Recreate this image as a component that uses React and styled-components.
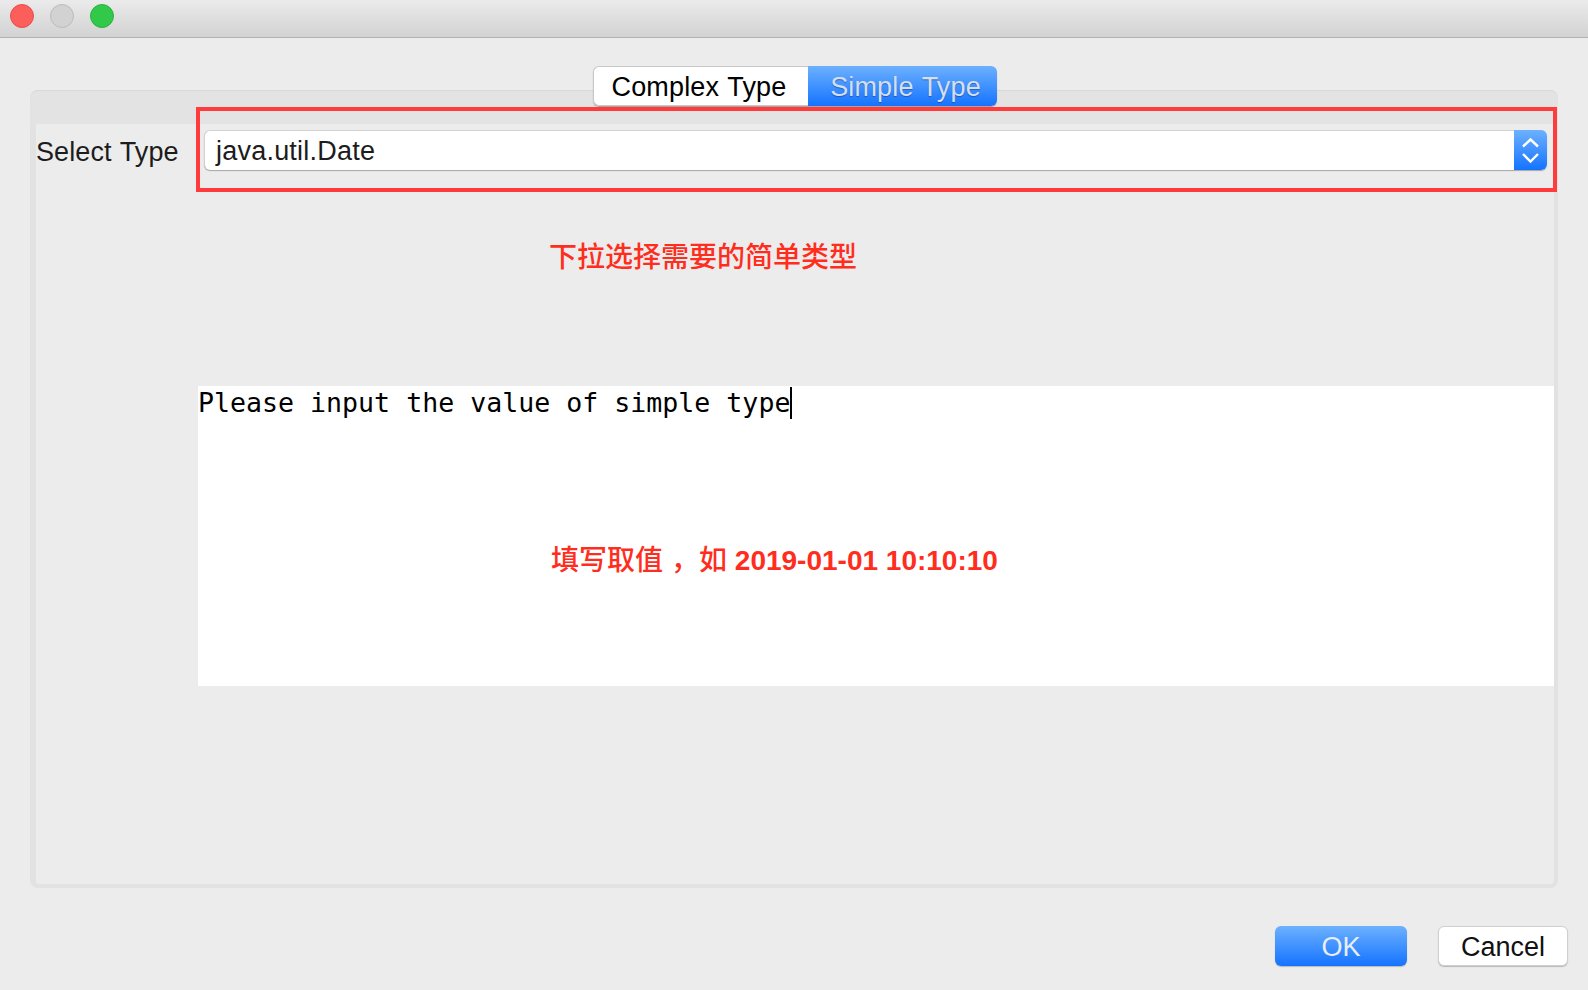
import React from "react";
import styled, { createGlobalStyle } from "styled-components";

const GlobalStyle = createGlobalStyle`
  html, body {
    margin: 0;
    padding: 0;
    overflow: hidden;
    background: #ececec;
  }
`;

const sans = `"Liberation Sans", Arial, sans-serif`;
const cjk = `"Liberation Sans", "Noto Sans CJK SC", sans-serif`;
const blue = `linear-gradient(#6db1ff, #1473ff)`;

const Window = styled.div`
  width: 1588px;
  height: 990px;
  background: #ececec;
  font-family: ${sans};
  color: #1c1c1c;
`;

const TitleBar = styled.header`
  display: flex;
  align-items: center;
  gap: 16px;
  padding: 0 10px 5px;
  height: 32px;
  background: linear-gradient(#ebebeb, #d2d2d2);
  border-bottom: 1px solid #b2b2b2;
`;

const Light = styled.span`
  width: 24px;
  height: 24px;
  box-sizing: border-box;
  border-radius: 50%;
  background: ${p => p.$color};
  border: 1px solid ${p => p.$edge};
`;

const Content = styled.main`
  padding: 52px 30px 0;
`;

const Panel = styled.section`
  position: relative;
  height: 798px;
  box-sizing: border-box;
  border: 4px solid #e2e2e2;
  border-left-width: 6px;
  border-top: 0;
  border-radius: 8px;
`;

const PanelHead = styled.div`
  height: 34px;
  box-sizing: border-box;
  margin: 0 -4px 0 -6px;
  background: #e3e3e3;
  border-top: 1px solid #d8d8d8;
  border-radius: 8px 8px 0 0;
`;

const Tabs = styled.div`
  position: absolute;
  top: -24px;
  left: 557px;
  display: flex;
  height: 40px;
  border-radius: 6px;
  box-shadow: 0 1px 1px rgba(0, 0, 0, 0.3);
`;

const Tab = styled.div`
  height: 40px;
  box-sizing: border-box;
  display: flex;
  align-items: center;
  justify-content: center;
  font-size: 27px;
  letter-spacing: 0.15px;
  word-spacing: 1px;
  width: ${p => (p.$active ? 189 : 215)}px;
  padding: ${p => (p.$active ? "2px 0 0 6px" : "2px 4px 0 0")};
  border-radius: ${p => (p.$active ? "0 6px 6px 0" : "6px 0 0 6px")};
  background: ${p => (p.$active ? blue : "#fff")};
  color: ${p => (p.$active ? "#d4deee" : "#000")};
  border: ${p => (p.$active ? "0" : "1px solid #c8c8c8")};
  border-right: 0;
  text-shadow: ${p => (p.$active ? "0 1px 1px rgba(0,0,0,0.3)" : "none")};
`;

const Body = styled.div`
  display: grid;
  grid-template-columns: 162px 1fr;
`;

const Label = styled.label`
  font-size: 27px;
  line-height: 56px;
  letter-spacing: 0.1px;
  word-spacing: 1px;
  white-space: nowrap;
`;

const Field = styled.div`
  display: flex;
  flex-direction: column;
`;

const Select = styled.div`
  display: flex;
  height: 40px;
  box-sizing: border-box;
  margin: 6px 7px 0 6px;
  background: #fff;
  border-radius: 6px;
  border-top: 1px solid #d2d2d2;
  border-left: 1px solid #d2d2d2;
  box-shadow: 0 1px 1px rgba(0, 0, 0, 0.3);
`;

const SelectValue = styled.div`
  flex: 1;
  padding: 1px 0 0 11px;
  font-size: 27px;
  letter-spacing: 0.22px;
  line-height: 39px;
`;

const Stepper = styled.div`
  width: 33px;
  height: 40px;
  margin-top: -1px;
  background: ${blue};
  border-radius: 0 6px 6px 0;
`;

const Note = styled.div`
  color: #ff2d1e;
  font-family: ${cjk};
  font-size: 28px;
  font-weight: 500;
  line-height: 40px;
  white-space: nowrap;
  padding-left: 351px;
  margin: 68px 0 108px;
`;

const Editor = styled.div`
  height: 300px;
  background: #fff;
`;

const EditorText = styled.div`
  font-family: "DejaVu Sans Mono", monospace;
  font-size: 26.6px;
  line-height: 34px;
  color: #000;
`;

const Caret = styled.span`
  display: inline-block;
  width: 2px;
  height: 32px;
  background: #000;
  vertical-align: -7px;
`;

const ValueNote = styled.div`
  color: #ff2d1e;
  font-family: ${cjk};
  font-size: 28px;
  font-weight: 700;
  line-height: 40px;
  white-space: nowrap;
  padding: 121px 0 0 353px;
`;

const NoteCjk = styled.span`
  font-weight: 500;
`;

const Comma = styled.span`
  padding-left: 8px;
`;

const Annotation = styled.div`
  position: absolute;
  top: 17px;
  left: 160px;
  width: 1361px;
  height: 85px;
  box-sizing: border-box;
  border: 4px solid #ff3b3b;
  pointer-events: none;
`;

const Footer = styled.footer`
  display: flex;
  justify-content: flex-end;
  gap: 31px;
  margin-right: -10px;
  padding-top: 38px;
`;

const Button = styled.button`
  width: ${p => (p.$primary ? 132 : 130)}px;
  height: 40px;
  padding: 2px 0 0;
  box-sizing: border-box;
  font-family: ${sans};
  font-size: 27px;
  border-radius: 6px;
  border: ${p => (p.$primary ? "0" : "1px solid #cfcfcf")};
  background: ${p => (p.$primary ? blue : "#fff")};
  color: ${p => (p.$primary ? "#e8eefa" : "#111")};
  box-shadow: 0 1px 1px rgba(0, 0, 0, 0.22);
`;

const Chevrons = () => (
  <svg width="33" height="40" viewBox="0 0 33 40" fill="none" stroke="#fff" strokeWidth="2.4">
    <polyline points="9,16.5 16.5,9.5 24,16.5" />
    <polyline points="9,24 16.5,31.5 24,24" />
  </svg>
);

export default function App() {
  return (
    <Window>
      <GlobalStyle />
      <TitleBar>
        <Light $color="#fc5f5b" $edge="#e2504c" />
        <Light $color="#d2d2d2" $edge="#bcbcbc" />
        <Light $color="#32c94b" $edge="#2bb141" />
      </TitleBar>
      <Content>
        <Panel>
          <PanelHead />
          <Tabs>
            <Tab>Complex Type</Tab>
            <Tab $active>Simple Type</Tab>
          </Tabs>
          <Body>
            <Label>Select Type</Label>
            <Field>
              <Select>
                <SelectValue>java.util.Date</SelectValue>
                <Stepper>
                  <Chevrons />
                </Stepper>
              </Select>
              <Note>下拉选择需要的简单类型</Note>
              <Editor>
                <EditorText>
                  Please input the value of simple type
                  <Caret />
                </EditorText>
                <ValueNote>
                  <NoteCjk>填写取值<Comma>，</Comma>如</NoteCjk> 2019-01-01 10:10:10
                </ValueNote>
              </Editor>
            </Field>
          </Body>
          <Annotation />
        </Panel>
        <Footer>
          <Button $primary>OK</Button>
          <Button>Cancel</Button>
        </Footer>
      </Content>
    </Window>
  );
}
